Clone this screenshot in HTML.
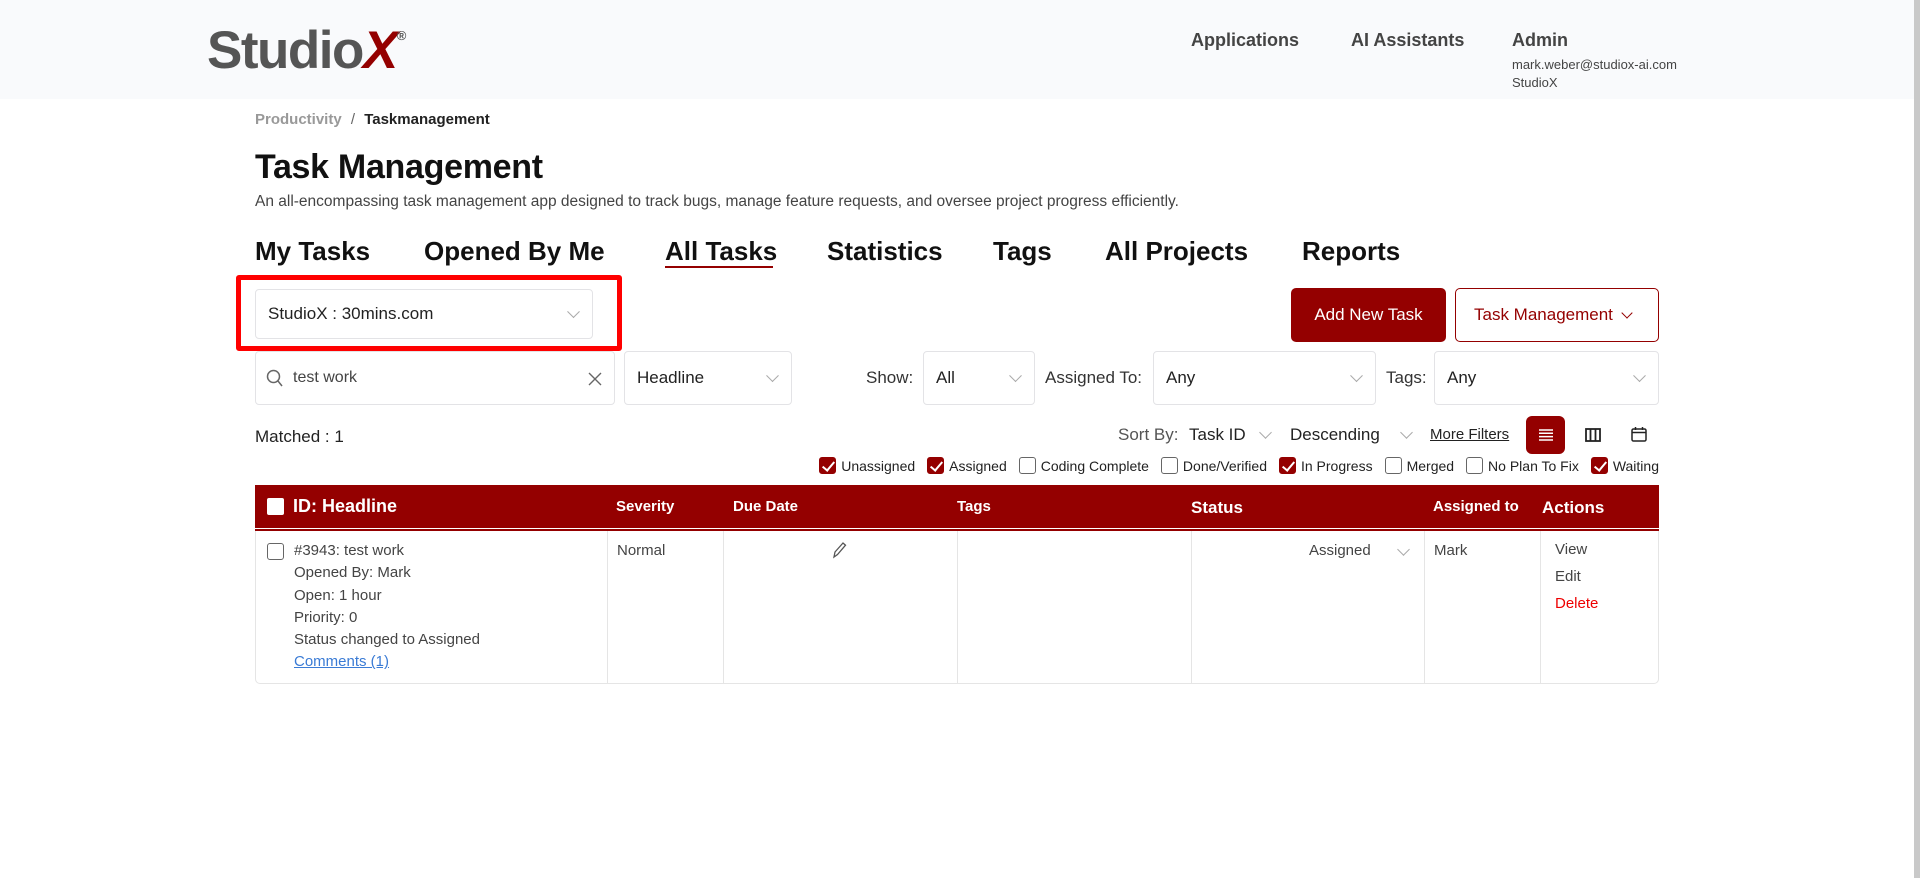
<!DOCTYPE html>
<html><head><meta charset="utf-8"><style>
*{box-sizing:border-box;margin:0;padding:0}
body{width:1920px;height:878px;position:relative;overflow:hidden;background:#fff;font-family:"Liberation Sans",sans-serif;color:#222}
.a{position:absolute;white-space:nowrap}
.hdr{position:absolute;left:0;top:0;width:1914px;height:99px;background:#f9fafc}
.sb{position:absolute;right:0;top:0;width:6px;height:878px;background:#c9c9c9}
.nav{font-size:18px;font-weight:bold;color:#444}
.sel{position:absolute;border:1px solid #e3e3e6;border-radius:4px;background:#fff;font-size:17px;color:#222;display:flex;align-items:center;padding-left:12px}
.chev{position:absolute;right:14px;top:50%;width:9px;height:9px;border-right:1.5px solid #aaa;border-bottom:1.5px solid #aaa;transform:translateY(-75%) rotate(45deg)}
.tab{font-size:26px;font-weight:bold;color:#111;top:236px}
.lbl{font-size:17px;color:#333}
.cbs{position:absolute;right:261px;top:457px;display:flex;align-items:center;font-size:14px;color:#222}
.cb{width:17px;height:17px;border:1px solid #666;border-radius:3px;margin-right:5px;margin-left:12px;display:inline-block;position:relative}
.cb.on{background:#940000;border-color:#940000}
.cb.on:after{content:"";position:absolute;left:5px;top:1px;width:5px;height:10px;border-right:2.5px solid #fff;border-bottom:2.5px solid #fff;transform:rotate(40deg)}
.th{position:absolute;left:255px;top:485px;width:1404px;height:43px;background:#940000;color:#fff;font-weight:bold;font-size:15px}
.th span{position:absolute;top:13px}
.row{position:absolute;left:255px;top:531px;width:1404px;height:153px;border:1px solid #e5e5e5;border-top:none;border-radius:0 0 5px 5px;font-size:15px;color:#444}
.vl{position:absolute;top:0;width:1px;height:152px;background:#e5e5e5}
.cell{position:absolute;line-height:22.3px;top:9px}
</style></head><body>
<div class="hdr"></div>
<div class="sb"></div>
<div class="a" style="left:207px;top:20px;font-size:53px;font-weight:bold;color:#555;letter-spacing:-1.5px">Studio<span style="color:#940000;font-style:italic">X</span><sup style="font-size:13px;vertical-align:top;position:relative;top:8px;color:#555;letter-spacing:0">®</sup></div>
<div class="a nav" style="left:1191px;top:30px">Applications</div>
<div class="a nav" style="left:1351px;top:30px">AI Assistants</div>
<div class="a nav" style="left:1512px;top:30px">Admin</div>
<div class="a" style="left:1512px;top:57px;font-size:13px;color:#444">mark.weber@studiox-ai.com</div>
<div class="a" style="left:1512px;top:75px;font-size:13px;color:#444">StudioX</div>

<div class="a" style="left:255px;top:111px;font-size:15px;font-weight:bold;color:#999">Productivity <span style="color:#666;font-weight:normal;margin:0 5px">/</span> <span style="color:#222">Taskmanagement</span></div>
<div class="a" style="left:255px;top:148px;font-size:34px;font-weight:bold;color:#111;letter-spacing:-0.3px">Task Management</div>
<div class="a" style="left:255px;top:193px;font-size:15.5px;color:#444">An all-encompassing task management app designed to track bugs, manage feature requests, and oversee project progress efficiently.</div>

<div class="a tab" style="left:255px">My Tasks</div>
<div class="a tab" style="left:424px">Opened By Me</div>
<div class="a tab" style="left:665px">All Tasks</div>
<div class="a" style="left:665px;top:266px;width:108px;height:2px;background:#940000"></div>
<div class="a tab" style="left:827px">Statistics</div>
<div class="a tab" style="left:993px">Tags</div>
<div class="a tab" style="left:1105px">All Projects</div>
<div class="a tab" style="left:1302px">Reports</div>

<div class="a" style="left:236px;top:275px;width:386px;height:76px;border:5px solid #f00;border-radius:3px"></div>
<div class="sel" style="left:255px;top:289px;width:338px;height:50px">StudioX : 30mins.com<i class="chev"></i></div>

<div class="a" style="left:1291px;top:288px;width:155px;height:54px;background:#940000;border-radius:5px;color:#fff;font-size:17px;display:flex;align-items:center;justify-content:center">Add New Task</div>
<div class="a" style="left:1455px;top:288px;width:204px;height:54px;border:1px solid #940000;border-radius:5px;color:#940000;font-size:17px;display:flex;align-items:center;padding-left:18px">Task Management <span style="display:inline-block;width:8px;height:8px;border-right:1.5px solid #940000;border-bottom:1.5px solid #940000;transform:rotate(45deg);margin-left:10px;margin-top:-5px"></span></div>

<div class="sel" style="left:255px;top:351px;width:360px;height:54px;padding-left:37px;font-size:16px;color:#444">test work
<svg style="position:absolute;left:10px;top:17px" width="18" height="20" viewBox="0 0 18 20"><circle cx="7.5" cy="7.5" r="6" fill="none" stroke="#666" stroke-width="1.5"/><line x1="12" y1="12" x2="16" y2="17" stroke="#666" stroke-width="1.5"/></svg>
<svg style="position:absolute;right:12px;top:20px" width="14" height="14" viewBox="0 0 14 14"><path d="M1 1L13 13M13 1L1 13" stroke="#666" stroke-width="1.4"/></svg></div>
<div class="sel" style="left:624px;top:351px;width:168px;height:54px">Headline<i class="chev"></i></div>
<div class="a lbl" style="left:866px;top:368px">Show:</div>
<div class="sel" style="left:923px;top:351px;width:112px;height:54px">All<i class="chev"></i></div>
<div class="a lbl" style="left:1045px;top:368px">Assigned To:</div>
<div class="sel" style="left:1153px;top:351px;width:223px;height:54px">Any<i class="chev"></i></div>
<div class="a lbl" style="left:1386px;top:368px">Tags:</div>
<div class="sel" style="left:1434px;top:351px;width:225px;height:54px">Any<i class="chev"></i></div>

<div class="a" style="left:255px;top:427px;font-size:17px;color:#222">Matched : 1</div>
<div class="a lbl" style="left:1118px;top:425px;color:#555">Sort By:</div>
<div class="a lbl" style="left:1189px;top:425px;color:#222">Task ID</div>
<div class="a" style="left:1261px;top:428px;width:9px;height:9px;border-right:1.5px solid #aaa;border-bottom:1.5px solid #aaa;transform:rotate(45deg)"></div>
<div class="a lbl" style="left:1290px;top:425px;color:#222">Descending</div>
<div class="a" style="left:1402px;top:428px;width:9px;height:9px;border-right:1.5px solid #aaa;border-bottom:1.5px solid #aaa;transform:rotate(45deg)"></div>
<div class="a" style="left:1430px;top:426px;font-size:15px;color:#222;text-decoration:underline">More Filters</div>
<div class="a" style="left:1526px;top:416px;width:39px;height:38px;background:#940000;border-radius:6px">
<svg style="position:absolute;left:13px;top:13px" width="14" height="12"><path d="M0 1H14M0 4.3H14M0 7.6H14M0 11H14" stroke="#fff" stroke-width="1.5"/></svg></div>
<svg class="a" style="left:1585px;top:428px" width="16" height="14"><rect x="1" y="1" width="14" height="12" fill="none" stroke="#222" stroke-width="1.8"/><path d="M5.5 1V13M10.5 1V13" stroke="#222" stroke-width="1.8"/></svg>
<svg class="a" style="left:1631px;top:426px" width="16" height="16"><rect x="1" y="3" width="14" height="12" rx="1.5" fill="none" stroke="#222" stroke-width="1.5"/><path d="M1 6.5H15M4.5 1V4M11.5 1V4" stroke="#222" stroke-width="1.5"/></svg>

<div class="cbs">
<i class="cb on"></i>Unassigned<i class="cb on"></i>Assigned<i class="cb"></i>Coding Complete<i class="cb"></i>Done/Verified<i class="cb on"></i>In Progress<i class="cb"></i>Merged<i class="cb"></i>No Plan To Fix<i class="cb on"></i>Waiting
</div>

<div class="th">
<i style="position:absolute;left:12px;top:13px;width:17px;height:17px;background:#fff;border-radius:2px"></i>
<span style="left:38px;top:11px;font-size:18px">ID: Headline</span>
<span style="left:361px">Severity</span>
<span style="left:478px">Due Date</span>
<span style="left:702px">Tags</span>
<span style="left:936px;font-size:17px">Status</span>
<span style="left:1178px">Assigned to</span>
<span style="left:1287px;font-size:17px">Actions</span>
</div>
<div class="a" style="left:255px;top:529px;width:1404px;height:2px;background:#940000"></div>
<div class="row">
<div class="vl" style="left:351px"></div><div class="vl" style="left:467px"></div><div class="vl" style="left:701px"></div><div class="vl" style="left:935px"></div><div class="vl" style="left:1168px"></div><div class="vl" style="left:1284px"></div>
<i style="position:absolute;left:11px;top:12px;width:17px;height:17px;border:1px solid #666;border-radius:3px"></i>
<div class="cell" style="left:38px">#3943: test work<br>Opened By: Mark<br>Open: 1 hour<br>Priority: 0<br>Status changed to Assigned<br><span style="color:#3a7bd5;text-decoration:underline">Comments (1)</span></div>
<div class="cell" style="left:361px">Normal</div>
<svg style="position:absolute;left:575px;top:10px" width="16" height="18"><path d="M3 16L4 11L12 2L14.5 4.2L6.5 13.5Z" fill="none" stroke="#555" stroke-width="1.3"/></svg>
<div class="cell" style="left:1053px">Assigned</div>
<i style="position:absolute;left:1143px;top:14px;width:9px;height:9px;border-right:1.5px solid #aaa;border-bottom:1.5px solid #aaa;transform:rotate(45deg)"></i>
<div class="cell" style="left:1178px">Mark</div>
<div class="cell" style="left:1299px;line-height:27px;top:5px">View<br>Edit<br><span style="color:#e00">Delete</span></div>
</div>
</body></html>
